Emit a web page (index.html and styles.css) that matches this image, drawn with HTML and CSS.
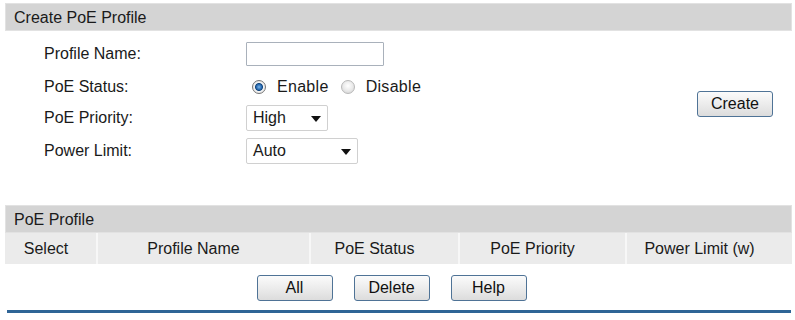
FILE: index.html
```html
<!DOCTYPE html>
<html lang="en">
<head>
  <meta charset="UTF-8" />
  <title>PoE Profile</title>
  <link rel="stylesheet" href="styles.css">
</head>
<body>
  <div class="page">
    <div class="bar">Create PoE Profile</div>

    <div class="create">
      <div class="fields">
        <div class="lbl">Profile Name:</div>
        <div class="ctl"><input class="text-in" type="text"></div>

        <div class="lbl">PoE Status:</div>
        <div class="ctl">
          <span class="radio checked"></span><span class="opt">Enable</span>
          <span class="radio"></span><span class="opt">Disable</span>
        </div>

        <div class="lbl">PoE Priority:</div>
        <div class="ctl"><div class="sel sel-short">High<span class="arrow"></span></div></div>

        <div class="lbl">Power Limit:</div>
        <div class="ctl"><div class="sel sel-long">Auto<span class="arrow"></span></div></div>
      </div>
      <button class="btn">Create</button>
    </div>

    <div class="bar bar-list">PoE Profile</div>
    <table class="grid">
      <tr>
        <th class="c1">Select</th>
        <th class="c2">Profile Name</th>
        <th class="c3">PoE Status</th>
        <th class="c4">PoE Priority</th>
        <th class="c5">Power Limit (w)</th>
      </tr>
    </table>

    <div class="actions">
      <button class="btn">All</button>
      <button class="btn">Delete</button>
      <button class="btn">Help</button>
    </div>
    <div class="rule"></div>
  </div>
</body>
</html>
```

FILE: styles.css
```css
:root {
  --bar-bg: #d4d4d4;
  --head-bg: #ebebeb;
  --text: #1a1a1a;
  --btn-border: #4f7396;
  --rule: #2f6596;
}
* {
  box-sizing: border-box;
}
body {
  margin: 0;
  font-family: "Liberation Sans", Arial, sans-serif;
  font-size: 16px;
  color: var(--text);
  background: #fff;
}
.page {
  margin: 3px 3px 0 5px;
}
.bar {
  height: 28px;
  line-height: 28px;
  padding-left: 8px;
  background: var(--bar-bg);
  border: 1px solid #e2e2e2;
}
.bar-list {
  margin-top: 35px;
}
.create {
  display: flex;
  align-items: center;
  justify-content: space-between;
  margin-top: 6px;
  padding-right: 19px;
}
.fields {
  display: grid;
  grid-template-columns: 202px auto;
  grid-template-rows: 33px 34px 28px 38px;
  align-items: center;
  padding-left: 39px;
}
.ctl {
  display: flex;
  align-items: center;
}
.text-in {
  width: 138px;
  height: 24px;
  border: 1px solid #a9b1bb;
  border-radius: 1px;
  font: inherit;
  padding: 0 4px;
}
.radio {
  width: 14px;
  height: 14px;
  margin: 0 11px 0 6px;
  border-radius: 50%;
  border: 1px solid #b8b8b8;
  background: radial-gradient(circle at 50% 40%, #ffffff 0%, #e8e8e8 55%, #cdcdcd 100%);
}
.radio.checked {
  border-color: #767676;
  background: radial-gradient(circle at 50% 50%, #7cb6ea 0%, #2a6cb2 30%, #17497f 42%, #f4f4f4 52%, #d6d6d6 100%);
}
.opt + .radio {
  margin-left: 12px;
}
.opt {
  letter-spacing: 0.3px;
}
.sel {
  position: relative;
  height: 26px;
  line-height: 24px;
  padding-left: 6px;
  border: 1px solid #d0d0d0;
  border-radius: 2px;
  background: #fff;
}
.sel-short {
  width: 82px;
}
.sel-long {
  width: 112px;
}
.arrow {
  position: absolute;
  right: 6px;
  top: 10px;
  border-left: 5px solid transparent;
  border-right: 5px solid transparent;
  border-top: 6px solid #111;
}
.btn {
  width: 76px;
  height: 26px;
  font: inherit;
  color: #111;
  border: 1px solid var(--btn-border);
  border-radius: 3px;
  background: linear-gradient(#fbfbfb, #e9e9e9 60%, #dcdcdc);
  padding: 0;
}
.grid {
  width: 100%;
  border-collapse: collapse;
}
.grid th {
  height: 31px;
  font-weight: normal;
  background: var(--head-bg);
  border-left: 2px solid #f7f7f7;
  text-align: center;
  padding: 0 20px 0 0;
}
.grid th.c1 {
  border-left: none;
  width: 92px;
  padding-right: 9px;
}
.grid th.c2 { width: 213px; }
.grid th.c3 { width: 149px; }
.grid th.c4 { width: 167px; }
.actions {
  display: flex;
  justify-content: center;
  gap: 21px;
  margin-top: 11px;
  padding-right: 14px;
}
.rule {
  height: 3px;
  margin: 9px 1px 0 2px;
  background: var(--rule);
}
```
